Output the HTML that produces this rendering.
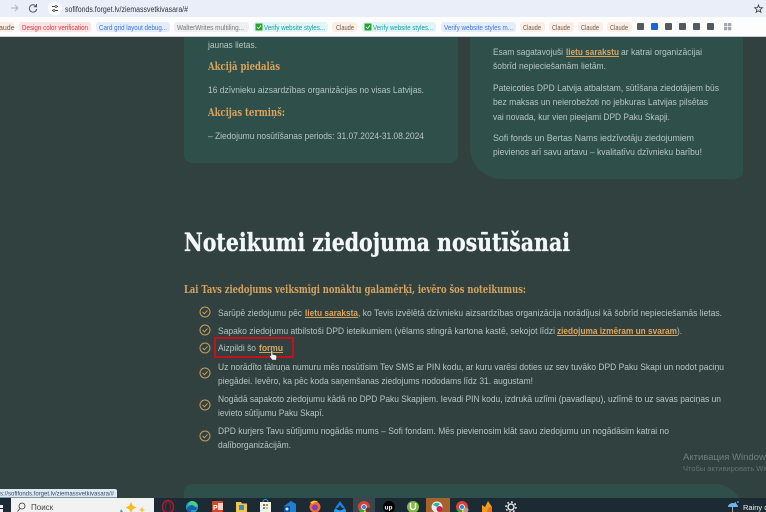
<!DOCTYPE html>
<html lang="lv"><head><meta charset="utf-8"><title>Noteikumi ziedojuma nosūtīšanai</title>
<style>
html,body{margin:0;padding:0;width:766px;height:512px;overflow:hidden;background:#30413f}
svg{display:block;position:absolute;left:0;top:0;filter:blur(.3px)}
text{font-family:"Liberation Sans","DejaVu Sans",sans-serif;white-space:pre}
.b{font-size:9.5px;fill:#b4c6c3}
.l{font-size:9.5px;fill:#dca660;font-weight:bold;text-decoration:underline}
.h{font-family:"DejaVu Serif","Liberation Serif",serif;font-weight:bold;fill:#d8a35e}
.p{font-size:7px}
</style></head><body>
<svg width="766" height="512" viewBox="0 0 766 512" xmlns="http://www.w3.org/2000/svg">
<rect width="766" height="512" fill="#30413f"/>
<!-- cards -->
<path d="M184 30H458V155a8 8 0 0 1-8 8H192a8 8 0 0 1-8-8Z" fill="#2f4f4a"/>
<path d="M470 30H743V171a8 8 0 0 1-8 8H502a32 32 0 0 1-32-32Z" fill="#2f4f4a"/>
<path d="M192 484H715a28 28 0 0 1 28 28H184V492a8 8 0 0 1 8-8Z" fill="#2f4f4a"/>
<!-- left card -->
<text x="208" y="48" class="b" textLength="49" lengthAdjust="spacingAndGlyphs">jaunas lietas.</text>
<text x="208" y="70" class="h" font-size="11.500" textLength="72" lengthAdjust="spacingAndGlyphs">Akcijā piedalās</text>
<text x="208" y="93" class="b" textLength="216" lengthAdjust="spacingAndGlyphs">16 dzīvnieku aizsardzības organizācijas no visas Latvijas.</text>
<text x="208" y="116" class="h" font-size="11.500" textLength="77" lengthAdjust="spacingAndGlyphs">Akcijas termiņš:</text>
<text x="208" y="139" class="b" textLength="216" lengthAdjust="spacingAndGlyphs">– Ziedojumu nosūtīšanas periods: 31.07.2024-31.08.2024</text>
<!-- right card -->
<text x="493" y="55" class="b" textLength="70" lengthAdjust="spacingAndGlyphs">Esam sagatavojuši</text>
<text x="566" y="55" class="l" textLength="53" lengthAdjust="spacingAndGlyphs">lietu sarakstu</text>
<text x="621" y="55" class="b" textLength="81" lengthAdjust="spacingAndGlyphs">ar katrai organizācijai</text>
<text x="493" y="69" class="b" textLength="113" lengthAdjust="spacingAndGlyphs">šobrīd nepieciešamām lietām.</text>
<text x="493" y="91" class="b" textLength="226" lengthAdjust="spacingAndGlyphs">Pateicoties DPD Latvija atbalstam, sūtīšana ziedotājiem būs</text>
<text x="493" y="105" class="b" textLength="215" lengthAdjust="spacingAndGlyphs">bez maksas un neierobežoti no jebkuras Latvijas pilsētas</text>
<text x="493" y="120" class="b" textLength="177" lengthAdjust="spacingAndGlyphs">vai novada, kur vien pieejami DPD Paku Skapji.</text>
<text x="493" y="141" class="b" textLength="201" lengthAdjust="spacingAndGlyphs">Sofi fonds un Bertas Nams iedzīvotāju ziedojumiem</text>
<text x="493" y="155" class="b" textLength="209" lengthAdjust="spacingAndGlyphs">pievienos arī savu artavu – kvalitatīvu dzīvnieku barību!</text>
<!-- main heading -->
<text x="184" y="251" font-size="25" font-weight="bold" fill="#f4f7f7" stroke="#f4f7f7" stroke-width=".35" style="font-family:'DejaVu Serif','Liberation Serif',serif" textLength="386" lengthAdjust="spacingAndGlyphs">Noteikumi ziedojuma nosūtīšanai</text>
<text x="184" y="293" class="h" font-size="11.500" textLength="342" lengthAdjust="spacingAndGlyphs">Lai Tavs ziedojums veiksmīgi nonāktu galamērķī, ievēro šos noteikumus:</text>
<!-- list -->
<text x="218" y="316" class="b" textLength="84" lengthAdjust="spacingAndGlyphs">Sarūpē ziedojumu pēc</text>
<text x="305" y="316" class="l" textLength="53" lengthAdjust="spacingAndGlyphs">lietu saraksta</text>
<text x="358" y="316" class="b" textLength="364" lengthAdjust="spacingAndGlyphs">, ko Tevis izvēlētā dzīvnieku aizsardzības organizācija norādījusi kā šobrīd nepieciešamās lietas.</text>
<text x="218" y="334" class="b" textLength="337" lengthAdjust="spacingAndGlyphs">Sapako ziedojumu atbilstoši DPD ieteikumiem (vēlams stingrā kartona kastē, sekojot līdzi</text>
<text x="557" y="334" class="l" textLength="120" lengthAdjust="spacingAndGlyphs">ziedojuma izmēram un svaram</text>
<text x="677" y="334" class="b" textLength="5" lengthAdjust="spacingAndGlyphs">).</text>
<text x="218" y="351" class="b" textLength="38" lengthAdjust="spacingAndGlyphs">Aizpildi šo</text>
<text x="259" y="351" class="l" textLength="24" lengthAdjust="spacingAndGlyphs">formu</text>
<text x="218" y="370" class="b" textLength="506" lengthAdjust="spacingAndGlyphs">Uz norādīto tālruņa numuru mēs nosūtīsim Tev SMS ar PIN kodu, ar kuru varēsi doties uz sev tuvāko DPD Paku Skapi un nodot paciņu</text>
<text x="218" y="384" class="b" textLength="315" lengthAdjust="spacingAndGlyphs">piegādei. Ievēro, ka pēc koda saņemšanas ziedojums nododams līdz 31. augustam!</text>
<text x="218" y="402" class="b" textLength="503" lengthAdjust="spacingAndGlyphs">Nogādā sapakoto ziedojumu kādā no DPD Paku Skapjiem. Ievadi PIN kodu, izdrukā uzlīmi (pavadlapu), uzlīmē to uz savas paciņas un</text>
<text x="218" y="416" class="b" textLength="106" lengthAdjust="spacingAndGlyphs">ievieto sūtījumu Paku Skapī.</text>
<text x="218" y="434" class="b" textLength="451" lengthAdjust="spacingAndGlyphs">DPD kurjers Tavu sūtījumu nogādās mums – Sofi fondam. Mēs pievienosim klāt savu ziedojumu un nogādāsim katrai no</text>
<text x="218" y="448" class="b" textLength="73" lengthAdjust="spacingAndGlyphs">dalīborganizācijām.</text>
<!-- check icons -->
<g fill="none" stroke="#c79d5c" stroke-width="1">
<g transform="translate(205 312)"><circle r="5"/><path d="M-2.400 0 -.6 1.800 2.500-1.600"/></g>
<g transform="translate(205 330)"><circle r="5"/><path d="M-2.400 0 -.6 1.800 2.500-1.600"/></g>
<g transform="translate(205 348)"><circle r="5"/><path d="M-2.400 0 -.6 1.800 2.500-1.600"/></g>
<g transform="translate(205 373)"><circle r="5"/><path d="M-2.400 0 -.6 1.800 2.500-1.600"/></g>
<g transform="translate(205 405)"><circle r="5"/><path d="M-2.400 0 -.6 1.800 2.500-1.600"/></g>
<g transform="translate(205 436)"><circle r="5"/><path d="M-2.400 0 -.6 1.800 2.500-1.600"/></g>
</g>
<!-- red highlight -->
<rect x="215" y="338" width="78" height="19" fill="none" stroke="#c4111b" stroke-width="2"/>
<!-- hand cursor -->
<path d="M271 351.500c0-1 1.600-1 1.600 0v3l3 .6c.8.2 1 .8 1 1.500l-.3 3.400h-4l-2.600-3.400c-.4-.8.5-1.400 1.300-.8v-4.300Z" fill="#f4f4f4" stroke="#333" stroke-width=".4"/>
<!-- watermark -->
<text x="683" y="460" font-size="9.500" fill="#6f807d">Активация Windows</text>
<text x="683" y="471" font-size="7.500" fill="#63746f">Чтобы активировать Windows</text>
<!-- browser top -->
<rect width="766" height="17" fill="#e9eef9"/>
<rect y="17" width="766" height="19" fill="#fdfdfe"/>
<rect y="36" width="766" height="1" fill="#c9cccf"/>
<path d="M11 8h7M15 5l3 3-3 3" fill="none" stroke="#b0b3b8" stroke-width="1"/>
<path d="M36 6.200a3.700 3.700 0 1 0 .7 2.800M36.500 4v2.700h-2.700" fill="none" stroke="#55585c" stroke-width="1"/>
<circle cx="55" cy="8.500" r="7" fill="#fbfcfe"/>
<path d="M52 6.500h3M57 6.500h1M52 10.500h1M55 10.500h3" stroke="#44474b" stroke-width="1"/><circle cx="56" cy="6.500" r="1" fill="none" stroke="#44474b" stroke-width=".7"/><circle cx="54" cy="10.500" r="1" fill="none" stroke="#44474b" stroke-width=".7"/>
<text x="65" y="12" font-size="8" fill="#33363a" textLength="123" lengthAdjust="spacingAndGlyphs">sofifonds.forget.lv/ziemassvetkivasara/#</text>
<path d="M758.500 5l1 2.600 2.800.2-2.200 1.800.8 2.700-2.400-1.500-2.400 1.500.8-2.700-2.200-1.800 2.800-.2Z" fill="none" stroke="#44474b" stroke-width=".9"/>
<!-- bookmarks -->
<rect x="-6" y="22" width="20" height="10" rx="3" fill="#fdeee3"/><text x="-1" y="30" class="p" fill="#66605a">aude</text>
<rect x="19" y="22" width="72" height="10" rx="3" fill="#fde4e4"/><text x="22" y="30" class="p" fill="#d0393b" textLength="66" lengthAdjust="spacingAndGlyphs">Design color verification</text>
<rect x="96" y="22" width="74" height="10" rx="3" fill="#e4edfd"/><text x="99" y="30" class="p" fill="#3f74dc" textLength="68" lengthAdjust="spacingAndGlyphs">Card grid layout debug...</text>
<rect x="174" y="22" width="75" height="10" rx="3" fill="#eeeff0"/><text x="177" y="30" class="p" fill="#777" textLength="67" lengthAdjust="spacingAndGlyphs">WalterWrites multiling...</text>
<rect x="253" y="22" width="75" height="10" rx="3" fill="#dff6f8"/><rect x="255.500" y="23.500" width="7" height="7" fill="#2aa52e"/><path d="M257 27l1.500 1.500 2.500-3" stroke="#fff" stroke-width=".8" fill="none"/><text x="264" y="30" class="p" fill="#1c9a9f" textLength="61" lengthAdjust="spacingAndGlyphs">Verify website styles...</text>
<rect x="332" y="22" width="25" height="10" rx="3" fill="#fdeee3"/><text x="336" y="30" class="p" fill="#66605a" textLength="18" lengthAdjust="spacingAndGlyphs">Claude</text>
<rect x="362" y="22" width="74" height="10" rx="3" fill="#dff6f8"/><rect x="364.500" y="23.500" width="7" height="7" fill="#2aa52e"/><path d="M366 27l1.500 1.500 2.500-3" stroke="#fff" stroke-width=".8" fill="none"/><text x="373" y="30" class="p" fill="#1c9a9f" textLength="60" lengthAdjust="spacingAndGlyphs">Verify website styles...</text>
<rect x="441" y="22" width="75" height="10" rx="3" fill="#e4edfd"/><text x="444" y="30" class="p" fill="#3f74dc" textLength="69" lengthAdjust="spacingAndGlyphs">Verify website styles m...</text>
<rect x="520" y="22" width="25" height="10" rx="3" fill="#fdeee3"/><text x="523" y="30" class="p" fill="#66605a" textLength="18" lengthAdjust="spacingAndGlyphs">Claude</text>
<rect x="549" y="22" width="25" height="10" rx="3" fill="#fdeee3"/><text x="552" y="30" class="p" fill="#66605a" textLength="18" lengthAdjust="spacingAndGlyphs">Claude</text>
<rect x="578" y="22" width="25" height="10" rx="3" fill="#fdeee3"/><text x="581" y="30" class="p" fill="#66605a" textLength="18" lengthAdjust="spacingAndGlyphs">Claude</text>
<rect x="607" y="22" width="25" height="10" rx="3" fill="#fdeee3"/><text x="610" y="30" class="p" fill="#66605a" textLength="18" lengthAdjust="spacingAndGlyphs">Claude</text>
<g fill="#55585d"><rect x="637" y="23" width="7" height="7" rx="1"/><rect x="651" y="23" width="7" height="7" rx="1" fill="#1a66d8"/><rect x="665" y="23" width="7" height="7" rx="1"/><rect x="679" y="23" width="7" height="7" rx="1"/><rect x="693" y="23" width="7" height="7" rx="1"/><rect x="707" y="23" width="7" height="7" rx="1"/></g>
<g fill="#a5a7aa"><rect x="724" y="23" width="3.300" height="3.300"/><rect x="728" y="23" width="3.300" height="3.300"/><rect x="724" y="27" width="3.300" height="3.300"/><rect x="728" y="27" width="3.300" height="3.300"/></g>
<!-- status bubble -->
<path d="M0 489H115a2 2 0 0 1 2 2V497.500H0Z" fill="#dde8f8"/>
<text x="0" y="495.500" font-size="6.500" fill="#3e4a5c" textLength="114" lengthAdjust="spacingAndGlyphs">s://sofifonds.forget.lv/ziemassvetkivasara/#</text>
<!-- taskbar -->
<rect y="498" width="766" height="14" fill="#1c2a33"/>
<rect x="0" y="505" width="3" height="3" fill="#eef"/><rect x="0" y="509" width="3" height="3" fill="#eef"/>
<rect x="11" y="498" width="143" height="14" fill="#f2f2f2"/>
<circle cx="22" cy="506" r="3" fill="none" stroke="#333" stroke-width=".8"/><path d="M20 508.500l-2.500 3" stroke="#333" stroke-width=".8"/>
<text x="31" y="510" font-size="8" fill="#444">Поиск</text>
<path d="M131 502l1.800 3.700 3.700 1.800-3.700 1.800-1.800 3.700-1.800-3.700-3.700-1.800 3.700-1.800Z" fill="#f7bb1d"/><path d="M142 507l1 2 2 1-2 1-1 2-1-2-2-1 2-1Z" fill="#f3c24d"/><path d="M121 509l2 3h-3Z" fill="#3aa0dd"/>
<!-- taskbar icons -->
<ellipse cx="168" cy="507" rx="5.500" ry="6.500" fill="none" stroke="#a51f35" stroke-width="1.500"/>
<ellipse cx="168" cy="507" rx="2.500" ry="5.500" fill="none" stroke="#8c1b30" stroke-width="1"/>
<circle cx="192" cy="507" r="6" fill="#1d9fc9"/><path d="M187 509c1-4 6-5 9-2 1 1 1 3-1 3h-3c-2 0-1 2 1 3-3 1-6-1-6-4Z" fill="#1a5ea8"/><path d="M192 501a6 6 0 0 1 6 5l-3 1c-1-2-4-3-7-1 1-3 2-5 4-5Z" fill="#45d08a"/>
<rect x="212" y="501" width="11" height="11" rx="1" fill="#d2492a"/><rect x="218" y="503" width="5" height="7" fill="#f5cfc2"/><text x="213" y="510" font-size="7" font-weight="bold" fill="#fff">P</text>
<path d="M236 502h5l1 1.500h5V512h-11Z" fill="#f0c64c"/><rect x="239" y="505" width="5" height="5" fill="#3c8dc7"/>
<rect x="260" y="502" width="11" height="10" fill="#f2f2f2"/><path d="M263 502a2.500 2.500 0 0 1 5 0" fill="none" stroke="#3aa4d8"/><rect x="263" y="504" width="2" height="2" fill="#e5482d"/><rect x="266" y="504" width="2" height="2" fill="#7fb900"/><rect x="263" y="507" width="2" height="2" fill="#2aa3ea"/><rect x="266" y="507" width="2" height="2" fill="#ffb900"/>
<path d="M284 506l7-5 5 3v8h-12Z" fill="#1c7fd0"/><rect x="284" y="506" width="6" height="6" fill="#0d4f98"/><circle cx="287" cy="509" r="1.500" fill="#cfe6fa"/>
<circle cx="315" cy="507" r="5.500" fill="#f26d2b"/><circle cx="315" cy="507.500" r="3" fill="#7b3fc4"/><path d="M310 503c2-3 6-3 8-1-2 0-4 0-5 2Z" fill="#fcc12e"/>
<path d="M340 501l5 7h-3l-2-3-2 3h-3Z" fill="#1f7fdc"/><path d="M334 510a6 6 0 0 0 12 0l-2-2c-1 3-7 3-8 0Z" fill="#2a9be8"/>
<rect x="353" y="498" width="22" height="14" fill="#3a474e"/>
<circle cx="364" cy="507" r="6" fill="#e0412f"/><path d="M364 507l5.200 3a6 6 0 0 1-10.400 0Z" fill="#2fa84f"/><path d="M364 507l0 6a6 6 0 0 0 5.200-3Z" fill="#f7c12c"/><circle cx="364" cy="507" r="2.500" fill="#3d7fe8" stroke="#fff" stroke-width=".8"/>
<circle cx="368" cy="510" r="2.500" fill="#5a3d30"/>
<circle cx="389" cy="507" r="6" fill="#050505"/><text x="384.500" y="509.500" font-size="6.500" font-weight="bold" fill="#fff">up</text>
<circle cx="413" cy="507" r="6" fill="#7fb93f"/><path d="M410.500 503v4a2.500 2.500 0 0 0 5 0v-4" fill="none" stroke="#fff" stroke-width="1.500"/>
<rect x="426" y="498" width="24" height="14" fill="#a5632b"/><circle cx="437" cy="507" r="5.500" fill="#e8eef0"/><path d="M433 505a4.500 4.500 0 0 1 7-1l-3 3Z" fill="#2bb3a6"/><circle cx="439.500" cy="509" r="3" fill="#d21f4c"/>
<circle cx="462" cy="507" r="6" fill="#e0412f"/><path d="M462 507l5.200 3a6 6 0 0 1-10.400 0Z" fill="#2fa84f"/><path d="M462 507l0 6a6 6 0 0 0 5.200-3Z" fill="#f7c12c"/><circle cx="462" cy="507" r="2.500" fill="#3d7fe8" stroke="#fff" stroke-width=".8"/><circle cx="466" cy="510" r="2.500" fill="#b79b8d"/>
<path d="M482 505l3 2 3-6 4 6v5h-10Z" fill="#f39a25"/><path d="M488 508l4-1v5h-5Z" fill="#e3741a"/>
<circle cx="511" cy="507" r="3" fill="none" stroke="#e8e8e8" stroke-width="1.500"/><circle cx="511" cy="507" r="5" fill="none" stroke="#e8e8e8" stroke-width="1.500" stroke-dasharray="1.800 2.100"/>
<!-- weather -->
<path d="M728 507a5 4 0 0 1 10 0Z" fill="#6cb6ea"/><path d="M732.500 507v5" stroke="#dfe8ee" stroke-width=".7"/><circle cx="738" cy="502" r=".8" fill="#8cc8f0"/><circle cx="735.500" cy="503" r=".8" fill="#8cc8f0"/>
<text x="743" y="510" font-size="7.500" fill="#f0f0f0">Rainy d</text>
</svg>
</body></html>
